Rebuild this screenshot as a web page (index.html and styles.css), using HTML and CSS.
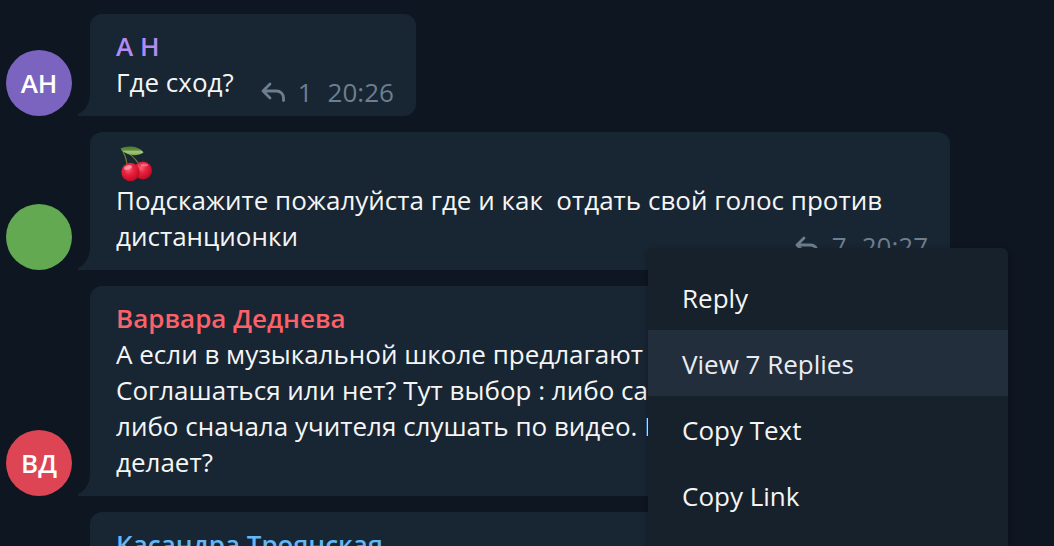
FILE: index.html
```
<!DOCTYPE html>
<html lang="ru">
<head>
<meta charset="utf-8">
<title>Chat</title>
<link rel="stylesheet" href="styles.css">
</head>
<body>
<svg class="defs" aria-hidden="true">
  <symbol id="reply" viewBox="0 0 24 20"><path d="M9 2 2 9l7 7M2 9h13.500a7 7 0 0 1 7 7v2.500" fill="none" stroke="currentColor" stroke-width="2.800" stroke-linecap="round" stroke-linejoin="round"/></symbol>
  <symbol id="tail" viewBox="0 0 13 22"><path d="M13 0h-1C12 9 7 17 .6 19.800 0 20.200 0 21 0 22h13Z" fill="currentColor"/></symbol>
</svg>
<main class="chat">
  <article class="message">
    <div class="avatar violet">АН</div>
    <div class="bubble">
      <svg class="tail" aria-hidden="true"><use href="#tail"/></svg>
      <h2 class="name violet-text">А Н</h2>
      <div class="content inline">
        <p class="text">Где сход?</p>
        <div class="meta"><svg class="reply-icon" aria-hidden="true"><use href="#reply"/></svg><span class="count">1</span><time>20:26</time></div>
      </div>
    </div>
  </article>
  <article class="message">
    <div class="avatar green"></div>
    <div class="bubble">
      <svg class="tail" aria-hidden="true"><use href="#tail"/></svg>
      <div class="name">
        <svg class="cherries" viewBox="0 0 34 36" role="img" aria-label="Вишни">
          <defs>
            <radialGradient id="fruit" cx=".4" cy=".35" r=".7"><stop offset="0" stop-color="#fb6075"/><stop offset=".4" stop-color="#e62542"/><stop offset=".75" stop-color="#d3112c"/><stop offset="1" stop-color="#a80f20"/></radialGradient>
            <linearGradient id="leaf" x2="0" y2="1"><stop stop-color="#4d792f"/><stop offset=".4" stop-color="#5c8d39"/><stop offset=".6" stop-color="#a5c97f"/><stop offset="1" stop-color="#79a94e"/></linearGradient>
          </defs>
          <path d="M1.500 3c3 4 4.500 9 5.500 15M3 4c7 3 12 8 16.500 15" fill="none" stroke="#66792d" stroke-width="1.300"/>
          <circle cx="23" cy="24.500" r="9" fill="url(#fruit)"/>
          <circle cx="10.500" cy="26" r="9.200" fill="url(#fruit)"/>
          <ellipse cx="8" cy="21.500" rx="4" ry="2" fill="#ffb3bd" opacity=".7" transform="rotate(-18 8 21.500)"/>
          <ellipse cx="24.500" cy="19" rx="3.500" ry="1.500" fill="#ff9dac" opacity=".5"/>
          <path d="M.5 2.500C6-.8 19-.8 23.500 6.500 17 11 6 10 .5 2.500Z" fill="url(#leaf)"/>
        </svg>
      </div>
      <div class="content stacked">
        <p class="text">Подскажите пожалуйста где и как  отдать свой голос против дистанционки</p>
        <div class="meta"><svg class="reply-icon" aria-hidden="true"><use href="#reply"/></svg><span class="count">7</span><time>20:27</time></div>
      </div>
    </div>
  </article>
  <article class="message">
    <div class="avatar red">ВД</div>
    <div class="bubble wide">
      <svg class="tail" aria-hidden="true"><use href="#tail"/></svg>
      <h2 class="name red-text">Варвара Деднева</h2>
      <p class="text">А если в музыкальной школе предлагают
Соглашаться или нет? Тут выбор : либо са
либо сначала учителя слушать по видео. К
делает?</p>
    </div>
  </article>
  <article class="message">
    <div class="avatar-space"></div>
    <div class="bubble wide">
      <h2 class="name blue-text">Касандра Троянская</h2>
    </div>
  </article>
</main>
<div class="menu" role="menu">
  <button class="item" role="menuitem">Reply</button>
  <button class="item active" role="menuitem">View 7 Replies</button>
  <button class="item" role="menuitem">Copy Text</button>
  <button class="item" role="menuitem">Copy Link</button>
</div>
</body>
</html>
```
FILE: styles.css
```
* {
  box-sizing: border-box;
}

body {
  position: relative;
  height: 100vh;
  margin: 0;
  overflow: hidden;
  background: #0e1621;
  color: #f5f5f5;
  font: 26px/36px "Open Sans", "Noto Sans", sans-serif;
}

.defs {
  display: none;
}

.chat {
  display: flex;
  flex-direction: column;
  gap: 16px;
  padding: 14px 104px 0 6px;
}

.message {
  display: flex;
  align-items: flex-end;
  gap: 18px;
}

.avatar,
.avatar-space {
  flex: none;
  width: 66px;
}

.avatar {
  display: flex;
  align-items: center;
  justify-content: center;
  height: 66px;
  border-radius: 50%;
  color: #fff;
  font-weight: 600;
}

.violet { background: #7b64c0; }
.green { background: #62a952; }
.red { background: #dd4554; }
.violet-text { color: #b48bf2; }
.red-text { color: #fb6169; }
.blue-text { color: #62b8f4; }

.bubble {
  position: relative;
  padding: 14px 22px 16px 26px;
  border-radius: 12px 12px 12px 0;
  background: #182533;
}

.wide {
  flex: 1;
}

.tail {
  position: absolute;
  bottom: 0;
  left: -12px;
  width: 13px;
  height: 22px;
  color: #182533;
}

.name {
  height: 36px;
  margin: 0;
  font-size: 26px;
  font-weight: 600;
}

.text {
  margin: 0;
  white-space: pre-wrap;
}

.cherries {
  display: block;
  width: 34px;
  height: 36px;
  margin-left: 4px;
}

.inline {
  display: flex;
  gap: 27px;
}

.stacked {
  display: grid;
}

.stacked > * {
  grid-area: 1 / 1;
}

.meta {
  display: flex;
  align-self: end;
  justify-self: end;
  align-items: center;
  height: 36px;
  margin-bottom: -10px;
  color: #6d7f8f;
}

.reply-icon {
  width: 24px;
  height: 20px;
  margin-right: 13px;
}

.count {
  margin-right: 15px;
}

.menu {
  position: absolute;
  top: 248px;
  right: 46px;
  bottom: 0;
  width: 360px;
  padding: 16px 0;
  border-radius: 6px 6px 0 0;
  background: #17212b;
  box-shadow: 0 2px 6px rgb(0 0 0 / 30%);
}

.item {
  display: block;
  width: 100%;
  height: 66px;
  padding: 2px 34px 0;
  border: 0;
  background: none;
  color: inherit;
  font: inherit;
  text-align: left;
}

.active {
  background: #232e3c;
  color: #e9ecf0;
}
```
